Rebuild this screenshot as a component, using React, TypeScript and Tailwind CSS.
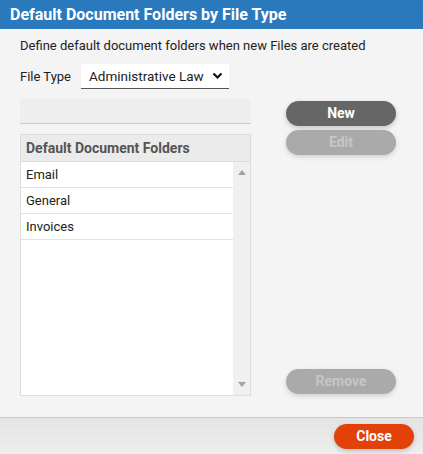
import React from 'react';

const folders = ['Email', 'General', 'Invoices'];

export default function App() {
  return (
    <div className="w-[423px] h-[454px] flex flex-col bg-[#f4f4f4] font-['Roboto',sans-serif] text-[#222]">
      <div className="h-[29px] bg-[#2a79bd] px-[10px] flex items-center">
        <h1 className="text-white font-bold text-[16px] leading-none">Default Document Folders by File Type</h1>
      </div>

      <div className="flex-1 flex flex-col px-[20px]">
        <p className="text-[13px] mt-[9px] leading-[16px]">Define default document folders when new Files are created</p>

        <div className="flex items-center mt-[10px] h-[25px]">
          <span className="text-[13px] w-[61px]">File Type</span>
          <div className="w-[148px] h-[25px] bg-white border-b border-[#555] flex items-center justify-between pl-[8px] pr-[6px]">
            <span className="text-[13.5px]">Administrative Law</span>
            <svg width="11" height="8" viewBox="0 0 11 8">
              <path d="M1.5 1.5 L5.5 5.5 L9.5 1.5" stroke="#111" strokeWidth="2.2" fill="none" />
            </svg>
          </div>
        </div>

        <div className="flex mt-[10px] flex-1">
          <div className="w-[231px] flex flex-col">
            <div className="h-[25px] bg-[#eeeeee] border-b border-[#cccccc]" />
            <div className="mt-[10px] h-[262px] border border-[#dddddd] flex flex-col bg-white">
              <div className="h-[27px] bg-[#ebebeb] border-b border-[#dddddd] flex items-center px-[5px]">
                <span className="text-[14px] font-bold text-[#555]">Default Document Folders</span>
              </div>
              <div className="flex flex-1">
                <div className="flex-1">
                  {folders.map((f) => (
                    <div key={f} className="h-[26px] border-b border-[#e2e2e2] flex items-center px-[5px] text-[13px]">
                      {f}
                    </div>
                  ))}
                </div>
                <div className="w-[17px] bg-[#f0f0f0] flex flex-col justify-between items-center py-[8px]">
                  <svg width="8" height="5" viewBox="0 0 8 5"><path d="M0 5 L4 0 L8 5 Z" fill="#a3a3a3" /></svg>
                  <svg width="8" height="5" viewBox="0 0 8 5"><path d="M0 0 L4 5 L8 0 Z" fill="#a3a3a3" /></svg>
                </div>
              </div>
            </div>
          </div>

          <div className="ml-[35px] w-[110px] flex flex-col pt-[2px] pb-[23px]">
            <button className="h-[25px] rounded-full bg-[#666666] text-white font-bold text-[14px] shadow-[0_2px_5px_rgba(0,0,0,0.2)]">New</button>
            <button className="mt-[4px] h-[25px] rounded-full bg-[#aaaaaa] text-[#c6c6c6] font-bold text-[14px] shadow-[0_2px_5px_rgba(0,0,0,0.15)]">Edit</button>
            <div className="flex-1" />
            <button className="h-[25px] rounded-full bg-[#aaaaaa] text-[#c6c6c6] font-bold text-[14px] shadow-[0_2px_5px_rgba(0,0,0,0.15)]">Remove</button>
          </div>
        </div>
      </div>

      <div className="h-[37px] border-t border-[#c8c8c8] bg-gradient-to-b from-[#e4e4e4] to-[#eeeeee] flex items-center justify-end pr-[9px]">
        <button className="w-[80px] h-[25px] rounded-full bg-[#e2410a] text-white font-bold text-[14px] shadow-[0_2px_5px_rgba(0,0,0,0.2)]">Close</button>
      </div>
    </div>
  );
}
